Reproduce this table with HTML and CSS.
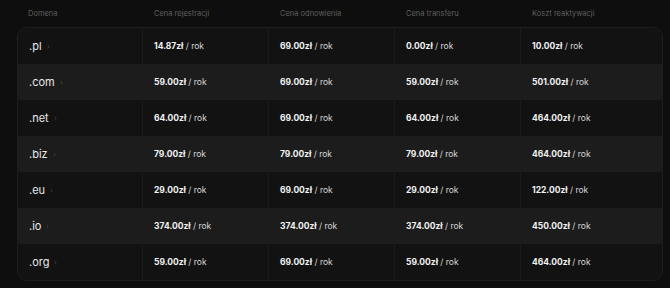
FILE: index.html
```html
<!DOCTYPE html>
<html lang="pl">
<head>
<meta charset="utf-8">
<link rel="stylesheet" href="styles.css">
</head>
<body>
<div class="wrap">
  <div class="head">
    <div class="hcell">Domena</div>
    <div class="hcell">Cena rejestracji</div>
    <div class="hcell">Cena odnowienia</div>
    <div class="hcell">Cena transferu</div>
    <div class="hcell">Koszt reaktywacji</div>
  </div>
  <div class="table">
    <div class="row">
      <div class="cell dom">.pl<svg class="chev" viewBox="0 0 4 6"><path d="M1 1.2L3 3L1 4.8"/></svg></div>
      <div class="cell"><b>14.87zł</b> / rok</div>
      <div class="cell"><b>69.00zł</b> / rok</div>
      <div class="cell"><b>0.00zł</b> / rok</div>
      <div class="cell"><b>10.00zł</b> / rok</div>
    </div>
    <div class="row alt">
      <div class="cell dom">.com<svg class="chev" viewBox="0 0 4 6"><path d="M1 1.2L3 3L1 4.8"/></svg></div>
      <div class="cell"><b>59.00zł</b> / rok</div>
      <div class="cell"><b>69.00zł</b> / rok</div>
      <div class="cell"><b>59.00zł</b> / rok</div>
      <div class="cell"><b>501.00zł</b> / rok</div>
    </div>
    <div class="row">
      <div class="cell dom">.net<svg class="chev" viewBox="0 0 4 6"><path d="M1 1.2L3 3L1 4.8"/></svg></div>
      <div class="cell"><b>64.00zł</b> / rok</div>
      <div class="cell"><b>69.00zł</b> / rok</div>
      <div class="cell"><b>64.00zł</b> / rok</div>
      <div class="cell"><b>464.00zł</b> / rok</div>
    </div>
    <div class="row alt">
      <div class="cell dom">.biz<svg class="chev" viewBox="0 0 4 6"><path d="M1 1.2L3 3L1 4.8"/></svg></div>
      <div class="cell"><b>79.00zł</b> / rok</div>
      <div class="cell"><b>79.00zł</b> / rok</div>
      <div class="cell"><b>79.00zł</b> / rok</div>
      <div class="cell"><b>464.00zł</b> / rok</div>
    </div>
    <div class="row">
      <div class="cell dom">.eu<svg class="chev" viewBox="0 0 4 6"><path d="M1 1.2L3 3L1 4.8"/></svg></div>
      <div class="cell"><b>29.00zł</b> / rok</div>
      <div class="cell"><b>69.00zł</b> / rok</div>
      <div class="cell"><b>29.00zł</b> / rok</div>
      <div class="cell"><b>122.00zł</b> / rok</div>
    </div>
    <div class="row alt">
      <div class="cell dom">.io<svg class="chev" viewBox="0 0 4 6"><path d="M1 1.2L3 3L1 4.8"/></svg></div>
      <div class="cell"><b>374.00zł</b> / rok</div>
      <div class="cell"><b>374.00zł</b> / rok</div>
      <div class="cell"><b>374.00zł</b> / rok</div>
      <div class="cell"><b>450.00zł</b> / rok</div>
    </div>
    <div class="row">
      <div class="cell dom">.org<svg class="chev" viewBox="0 0 4 6"><path d="M1 1.2L3 3L1 4.8"/></svg></div>
      <div class="cell"><b>59.00zł</b> / rok</div>
      <div class="cell"><b>69.00zł</b> / rok</div>
      <div class="cell"><b>59.00zł</b> / rok</div>
      <div class="cell"><b>464.00zł</b> / rok</div>
    </div>
  </div>
</div>
</body>
</html>
```
FILE: styles.css
```css
* { box-sizing: border-box; }
html, body { margin: 0; padding: 0; }
body {
  background: #0e0e0e;
  font-family: Inter, "Open Sans", sans-serif;
  color: #e6e6e6;
  width: 670px;
  height: 288px;
  overflow: hidden;
}
.wrap {
  padding: 0 7px 0 17px;
}
.head {
  display: grid;
  grid-template-columns: 126px 126px 126px 126px 1fr;
  height: 27px;
  align-items: center;
}
.hcell {
  padding-left: 11px;
  font-size: 7.5px;
  color: #5f5f5f;
  padding-bottom: 1px;
}
.table {
  border: 1px solid #1e1e1e;
  border-radius: 10px;
  overflow: hidden;
  background: #121212;
}
.row {
  display: grid;
  grid-template-columns: 125px 126px 126px 126px 1fr;
  height: 36px;
  background: #121212;
}
.row.alt { background: #1c1c1c; }
.cell {
  display: flex;
  align-items: center;
  padding-left: 11px;
  border-right: 1px solid #1b1b1b;
  font-size: 8.5px;
  color: #d8d8d8;
  white-space: pre;
}
.cell:last-child { border-right: none; }
.cell b { font-weight: 700; color: #f2f2f2; }
.cell.dom {
  font-size: 11px;
  color: #e8e8e8;
  padding-left: 11px;
}
.chev {
  width: 3px;
  height: 5px;
  margin-left: 5px;
  margin-top: 1px;
  fill: none;
  stroke: #4e4e4e;
  stroke-width: 1;
}
```
